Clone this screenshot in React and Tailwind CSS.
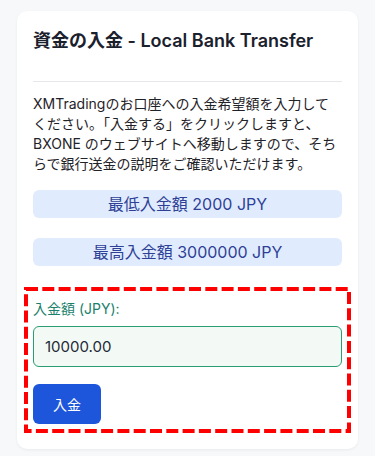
export default function App() {
  return (
    <div className="min-h-[456px] bg-[#f7f8fa] px-[17px] pt-[11px] font-['Inter','Noto_Sans_CJK_JP',sans-serif]">
      <div className="rounded-[10px] bg-white p-4 shadow-[0_1px_3px_rgba(0,0,0,0.06)]">
        <h2 className="text-[18px] leading-7 font-semibold text-[#1a202c]">
          資金の入金 - Local Bank Transfer
        </h2>
        <hr className="mt-[26px] border-t border-[#e5e7eb]" />
        <p className="mt-[12px] text-[14px] leading-5 text-[#1f2328]">
          XMTradingのお口座への入金希望額を入力してください。「入金する」をクリックしますと、BXONE のウェブサイトへ移動しますので、そちらで銀行送金の説明をご確認いただけます。
        </p>
        <div className="mt-4 flex h-7 items-center justify-center rounded-md bg-[#e0ecfe] text-[16px] text-[#2f3f96]">
          最低入金額 2000 JPY
        </div>
        <div className="mt-5 flex h-7 items-center justify-center rounded-md bg-[#e0ecfe] text-[16px] text-[#2f3f96]">
          最高入金額 3000000 JPY
        </div>
        {/* 点線枠の入力フォーム */}
        <div className="relative -mx-[9px] mt-[21px] px-[9px] pt-[12px] pb-[9px]">
          <svg className="pointer-events-none absolute inset-[2px] h-[calc(100%-4px)] w-[calc(100%-4px)] overflow-visible">
            <rect
              x="0"
              y="0"
              width="100%"
              height="100%"
              fill="none"
              stroke="#ff0000"
              strokeWidth="4"
              strokeDasharray="12 4.3"
            />
          </svg>
          <label className="block text-[14px] leading-5 text-[#1b7f6c]">
            入金額 (JPY):
          </label>
          <input
            className="mt-[7px] block h-[41px] w-full rounded-md border border-[#2a9d72] bg-[#f3faf6] px-[11px] text-[15px] text-[#1f2a37] outline-none"
            defaultValue="10000.00"
          />
          <button className="mt-[17px] h-10 w-[68px] rounded-md bg-[#1d56db] text-[14px] text-white">
            入金
          </button>
        </div>
      </div>
    </div>
  );
}
